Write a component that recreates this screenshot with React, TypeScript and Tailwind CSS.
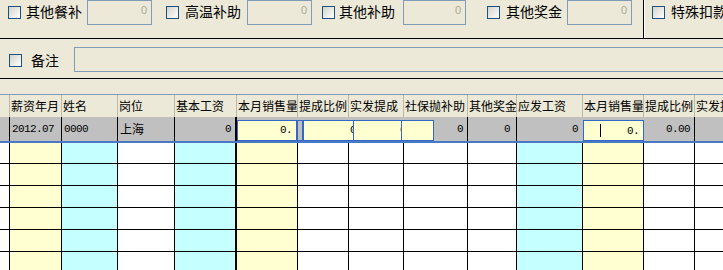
import React from 'react';

// ── Shared bits ───────────────────────────────────────────────────────────────

const CJK = "font-['Noto_Sans_CJK_SC','Noto_Sans',sans-serif]";
const NUM = "font-['Liberation_Mono',monospace] text-[11px] tracking-[-0.6px]";

function Check({ className = '' }: { className?: string }) {
  return (
    <span
      className={`block h-[13px] w-[13px] shrink-0 border border-[#1C5180] bg-gradient-to-br from-[#D4D4CC] to-white ${className}`}
    />
  );
}

function NumBox({ w }: { w: string }) {
  return (
    <div
      className={`${w} h-[25px] shrink-0 border border-[#7F9DB9] pr-[4px] pt-[2px] text-right font-['Liberation_Sans',sans-serif] text-[11px] leading-[14px] text-[#ACA899]`}
    >
      0
    </div>
  );
}

// ── Grid columns ──────────────────────────────────────────────────────────────

const cols = [
  { w: 'w-[10px]', bg: 'bg-white', head: '' },
  { w: 'w-[52px]', bg: 'bg-[#FFFFD2]', head: '薪资年月' },
  { w: 'w-[56px]', bg: 'bg-[#C6FFFF]', head: '姓名' },
  { w: 'w-[57px]', bg: 'bg-white', head: '岗位' },
  { w: 'w-[62px]', bg: 'bg-[#C6FFFF]', head: '基本工资', thick: true },
  { w: 'w-[61px]', bg: 'bg-[#FFFFD2]', head: '本月销售量' },
  { w: 'w-[51px]', bg: 'bg-white', head: '提成比例' },
  { w: 'w-[55px]', bg: 'bg-white', head: '实发提成' },
  { w: 'w-[64px]', bg: 'bg-white', head: '社保抛补助' },
  { w: 'w-[49px]', bg: 'bg-white', head: '其他奖金' },
  { w: 'w-[66px]', bg: 'bg-[#C6FFFF]', head: '应发工资' },
  { w: 'w-[61px]', bg: 'bg-[#FFFFD2]', head: '本月销售量' },
  { w: 'w-[51px]', bg: 'bg-white', head: '提成比例' },
  { w: 'w-[60px]', bg: 'bg-white', head: '实发提成' },
];

function EmptyRow({ h }: { h: string }) {
  return (
    <div className={`flex ${h} border-b border-black`}>
      {cols.map((c, i) => (
        <div
          key={i}
          className={`${c.w} shrink-0 ${c.bg} ${c.thick ? 'border-r-2' : 'border-r'} border-black`}
        />
      ))}
    </div>
  );
}

// ── Page ──────────────────────────────────────────────────────────────────────

export default function App() {
  return (
    <div className={`h-[270px] w-[723px] overflow-hidden bg-[#ECE9D8] text-black ${CJK}`}>
      {/* Allowance checkboxes */}
      <div className="flex h-[39px] items-start overflow-hidden border-b border-black text-[14px] leading-[16px]">
        <Check className="ml-[8px] mt-[6px]" />
        <span className="ml-[5px] mt-[3px] w-[61px] shrink-0">其他餐补</span>
        <NumBox w="w-[65px]" />

        <Check className="ml-[14px] mt-[6px]" />
        <span className="ml-[6px] mt-[3px] w-[62px] shrink-0">高温补助</span>
        <NumBox w="w-[65px]" />

        <Check className="ml-[10px] mt-[6px]" />
        <span className="ml-[4px] mt-[3px] w-[64px] shrink-0">其他补助</span>
        <NumBox w="w-[63px]" />

        <Check className="ml-[21px] mt-[6px]" />
        <span className="ml-[6px] mt-[3px] w-[61px] shrink-0">其他奖金</span>
        <NumBox w="w-[65px]" />

        <div className="ml-[11px] h-full w-[2px] shrink-0 border-l border-black bg-white" />
        <Check className="ml-[7px] mt-[6px]" />
        <span className="ml-[6px] mt-[3px] shrink-0 whitespace-nowrap">特殊扣款</span>
      </div>

      {/* Remark */}
      <div className="flex h-[40px] items-start overflow-hidden border-b border-black text-[14px] leading-[16px]">
        <Check className="ml-[9px] mt-[15px]" />
        <span className="ml-[9px] mt-[13px] w-[43px] shrink-0">备注</span>
        <div className="mt-[8px] h-[25px] w-[700px] shrink-0 border border-[#7F9DB9]" />
      </div>

      <div className="h-[15px]" />

      {/* Salary grid */}
      <div className="overflow-hidden border-t border-[#7F9DB9] text-[12px]">
        {/* Header */}
        <div className="flex h-[22px] whitespace-nowrap">
          {cols.map((c, i) => (
            <div
              key={i}
              className={`${c.w} shrink-0 overflow-hidden border-r border-[#BDB9A8] pl-[1px] leading-[22px]`}
            >
              {c.head}
            </div>
          ))}
        </div>

        {/* Current row (editing) */}
        <div className="flex h-[26px] whitespace-nowrap border-b-2 border-[#4A78C4] bg-[#C0C0C0] leading-[24px]">
          <div className="w-[10px] shrink-0 border-r border-black" />
          <div className={`w-[52px] shrink-0 border-r border-black pl-[2px] ${NUM}`}>2012.07</div>
          <div className={`w-[56px] shrink-0 border-r border-black pl-[2px] ${NUM}`}>0000</div>
          <div className="w-[57px] shrink-0 border-r border-black pl-[2px]">上海</div>
          <div className={`w-[62px] shrink-0 border-r-2 border-black pr-[4px] text-right ${NUM}`}>0</div>

          <div className="w-[60px] shrink-0 pt-[3px]">
            <div className={`h-[21px] border border-[#316AC5] bg-[#FFFFD2] pr-[4px] text-right leading-[18px] ${NUM}`}>
              0.
            </div>
          </div>
          <div className="w-[6px] shrink-0 pt-[3px]">
            <div className="h-[21px] border border-[#316AC5] bg-[#C0C0C0]" />
          </div>
          <div className="flex shrink-0 pt-[3px]">
            <div className={`h-[21px] w-[50px] overflow-hidden border-y border-l border-[#316AC5] bg-[#FFFFD2] text-right leading-[18px] ${NUM}`}>
              <span className="-mr-[3px]">0</span>
            </div>
            <div className={`h-[21px] w-[48px] overflow-hidden border-y border-l border-[#316AC5] bg-[#FFFFD2] text-right leading-[18px] ${NUM}`}>
              <span className="-mr-[5px]">0</span>
            </div>
            <div className="h-[21px] w-[33px] border border-[#316AC5] bg-[#FFFFD2]" />
          </div>
          <div className={`w-[34px] shrink-0 border-r border-black pr-[4px] text-right ${NUM}`}>0</div>
          <div className={`w-[49px] shrink-0 border-r border-black pr-[6px] text-right ${NUM}`}>0</div>
          <div className={`w-[66px] shrink-0 pr-[5px] text-right ${NUM}`}>0</div>

          <div className="w-[61px] shrink-0 pt-[3px]">
            <div className={`flex h-[21px] items-center border border-[#316AC5] bg-[#FFFFD2] pr-[4px] ${NUM}`}>
              <span className="ml-[16px] h-[13px] w-[1px] bg-black" />
              <span className="ml-auto leading-[18px]">0.</span>
            </div>
          </div>
          <div className={`w-[51px] shrink-0 border-r border-black pr-[4px] text-right ${NUM}`}>0.00</div>
          <div className="w-[60px] shrink-0" />
        </div>

        {/* Empty rows */}
        <EmptyRow h="h-[21px]" />
        <EmptyRow h="h-[22px]" />
        <EmptyRow h="h-[22px]" />
        <EmptyRow h="h-[22px]" />
        <EmptyRow h="h-[22px]" />
        <EmptyRow h="h-[22px]" />
      </div>
    </div>
  );
}
